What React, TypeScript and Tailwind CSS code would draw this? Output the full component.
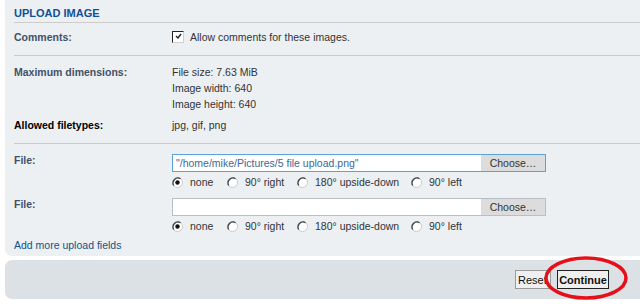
import React from "react";

function Radio({ checked }: { checked?: boolean }) {
  return (
    <svg width="11" height="11" viewBox="0 0 11 11" className="shrink-0">
      <circle cx="5.5" cy="5.5" r="5" fill="#ffffff" stroke="#c8c8c8" strokeWidth="1" />
      <path d="M8.5 1.7 A5 5 0 0 0 1.7 8.5" fill="none" stroke="#3a3a3a" strokeWidth="1.2" />
      {checked && <circle cx="5.5" cy="5.5" r="2.2" fill="#111111" />}
    </svg>
  );
}

function RadioRow() {
  const items = [
    { label: "none", checked: true, w: "w-[55px]" },
    { label: "90° right", checked: false, w: "w-[70px]" },
    { label: "180° upside-down", checked: false, w: "w-[114px]" },
    { label: "90° left", checked: false, w: "w-[50px]" },
  ];
  return (
    <div className="flex items-center h-[14px] mt-[3px] text-[#333333]">
      {items.map((it) => (
        <div key={it.label} className={`flex items-center ${it.w}`}>
          <Radio checked={it.checked} />
          <span className="ml-[7px] whitespace-nowrap">{it.label}</span>
        </div>
      ))}
    </div>
  );
}

function FileInput({ value, focused }: { value?: string; focused?: boolean }) {
  return (
    <div
      className={`flex w-[374px] h-[18px] bg-white border ${
        focused ? "border-[#5aa2dc]" : "border-[#b9bfc4]"
      }`}
    >
      <div className="flex-1 pl-[3px] flex items-center text-[#3e6797] whitespace-nowrap overflow-hidden">
        {value}
      </div>
      <div className="w-[64px] bg-[#dcdcdc] flex items-center justify-center text-[#333333]">
        Choose…
      </div>
    </div>
  );
}

export default function App() {
  return (
    <div className="relative w-[640px] h-[308px] bg-white overflow-hidden font-['Liberation_Sans',Arial,sans-serif] text-[10.5px] leading-[14px]">
      <div className="ml-[5px] w-[645px] bg-[#ecf0f3] rounded-bl-[7px] pl-[9px]">
        <div className="h-[23px] pt-[4px] border-b border-[#cccccc] flex items-center">
          <span className="text-[#115098] font-bold text-[11px]">UPLOAD IMAGE</span>
        </div>

        <div className="flex pt-[7px] pb-[11px] border-b border-[#cccccc]">
          <div className="w-[158px] font-bold text-[#425067]">Comments:</div>
          <div className="flex items-center text-[#333333]">
            <span className="relative w-[12px] h-[12px] bg-white border border-[#cfcfcf] border-t-[#222222] border-l-[#222222] mr-[6px]">
              <svg width="10" height="10" viewBox="0 0 10 10" className="absolute left-0 top-0">
                <path d="M3 4 L5 6 L8 2" fill="none" stroke="#222222" strokeWidth="1.4" />
              </svg>
            </span>
            Allow comments for these images.
          </div>
        </div>

        <div className="pt-[8px] pb-[10px] border-b border-[#cccccc]">
          <div className="flex leading-[16px]">
            <div className="w-[158px] font-bold text-[#425067]">Maximum dimensions:</div>
            <div className="text-[#333333]">
              <div>File size: 7.63 MiB</div>
              <div>Image width: 640</div>
              <div>Image height: 640</div>
            </div>
          </div>
          <div className="flex leading-[16px] mt-[5px]">
            <div className="w-[158px] font-bold text-black">Allowed filetypes:</div>
            <div className="text-[#333333]">jpg, gif, png</div>
          </div>
        </div>

        <div className="flex pt-[10px]">
          <div className="w-[158px] text-[#425067] font-bold leading-[12px]">File:</div>
          <div>
            <FileInput value={'"/home/mike/Pictures/5 file upload.png"'} focused />
            <RadioRow />
          </div>
        </div>

        <div className="flex pt-[9px]">
          <div className="w-[158px] text-[#425067] font-bold leading-[12px]">File:</div>
          <div>
            <FileInput />
            <RadioRow />
          </div>
        </div>

        <div className="pt-[5px] pb-[4px]">
          <span className="text-[#105289]">Add more upload fields</span>
        </div>
      </div>

      <div className="mt-[4px] ml-[5px] w-[645px] h-[39px] bg-[#dce1e5] rounded-l-[7px] flex justify-end items-start pt-[10px] pr-[41px]">
        <div className="w-[36px] h-[19px] bg-[#efefef] border border-[#9a9a9a] flex items-center pl-[2px] text-[#111111] text-[11px]">
          Reset
        </div>
        <div className="ml-[6px] w-[52px] h-[19px] bg-[#efefef] border border-[#222222] flex items-center justify-center font-bold text-[#111111] text-[11px]">
          Continue
        </div>
      </div>

      <svg
        className="absolute left-[543px] top-[255px]"
        width="86"
        height="46"
        viewBox="0 0 86 46"
      >
        <ellipse cx="43" cy="23" rx="40" ry="20" fill="none" stroke="#e4111b" strokeWidth="3.5" />
      </svg>
    </div>
  );
}
